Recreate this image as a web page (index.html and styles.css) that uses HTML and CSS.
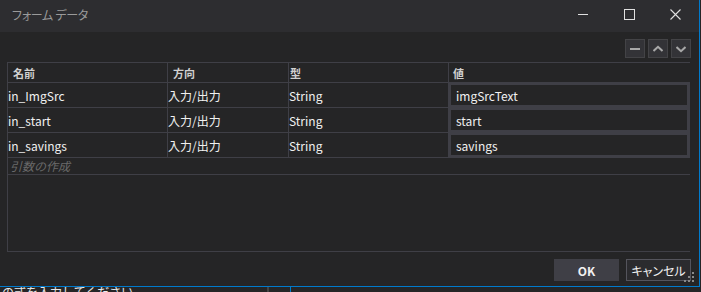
FILE: index.html
```html
<!DOCTYPE html>
<html lang="ja">
<head>
<meta charset="utf-8">
<link rel="stylesheet" href="styles.css">
</head>
<body>
<div class="window">
  <div class="titlebar">
    <div class="title">フォーム データ</div>
    <div class="controls">
      <div class="ctl"><svg width="10" height="10" viewBox="0 0 10 10"><path d="M0 5.5H10" stroke="#e0e0e0" stroke-width="1"/></svg></div>
      <div class="ctl"><svg width="11" height="11" viewBox="0 0 11 11"><rect x="0.5" y="0.5" width="10" height="10" fill="none" stroke="#e0e0e0" stroke-width="1"/></svg></div>
      <div class="ctl"><svg width="11" height="11" viewBox="0 0 11 11"><path d="M0.5 0.5L10.5 10.5M10.5 0.5L0.5 10.5" stroke="#e0e0e0" stroke-width="1.1"/></svg></div>
    </div>
  </div>
  <div class="content">
    <div class="toolbar">
      <div class="tbtn"><svg width="10" height="10" viewBox="0 0 10 10"><path d="M0 5H10" stroke="#a8a8a8" stroke-width="2"/></svg></div>
      <div class="tbtn"><svg width="10" height="10" viewBox="0 0 10 10"><path d="M0.5 7L5 2.8L9.5 7" fill="none" stroke="#a8a8a8" stroke-width="2"/></svg></div>
      <div class="tbtn"><svg width="10" height="10" viewBox="0 0 10 10"><path d="M0.5 3L5 7.2L9.5 3" fill="none" stroke="#a8a8a8" stroke-width="2"/></svg></div>
    </div>
    <div class="grid">
      <div class="hd h1">名前</div>
      <div class="hd h2">方向</div>
      <div class="hd h3">型</div>
      <div class="hd h4">値</div>

      <div class="cell">in_ImgSrc</div>
      <div class="cell">入力/出力</div>
      <div class="cell">String</div>
      <div class="vcell"><div class="tbox">imgSrcText</div></div>

      <div class="cell">in_start</div>
      <div class="cell">入力/出力</div>
      <div class="cell">String</div>
      <div class="vcell"><div class="tbox">start</div></div>

      <div class="cell">in_savings</div>
      <div class="cell">入力/出力</div>
      <div class="cell">String</div>
      <div class="vcell"><div class="tbox">savings</div></div>

      <div class="newrow">引数の作成</div>
      <div class="filler"></div>
    </div>
    <div class="footer">
      <div class="btn ok">OK</div>
      <div class="btn cancel">キャンセル</div>
    </div>
  </div>
  <svg class="grip" width="12" height="12" viewBox="0 0 12 12">
    <rect x="9" y="0" width="2" height="2" fill="#8a8a8a"/>
    <rect x="5" y="4" width="2" height="2" fill="#8a8a8a"/>
    <rect x="9" y="4" width="2" height="2" fill="#8a8a8a"/>
    <rect x="1" y="8" width="2" height="2" fill="#8a8a8a"/>
    <rect x="5" y="8" width="2" height="2" fill="#8a8a8a"/>
    <rect x="9" y="8" width="2" height="2" fill="#8a8a8a"/>
  </svg>
</div>
<div class="behind">
  <div class="behind-text">の式を入力してください</div>
  <div class="behind-gray"></div>
  <div class="behind-blue"></div>
</div>
</body>
</html>
```
FILE: styles.css
```css
html, body {
  margin: 0;
  padding: 0;
}
body {
  width: 701px;
  height: 292px;
  overflow: hidden;
  background: #252526;
  font-family: "Noto Sans CJK JP", "Noto Sans", sans-serif;
  font-size: 12px;
  color: #f1f1f1;
}
.window {
  position: relative;
  width: 699px;
  height: 286px;
  border-right: 1px solid #007acc;
  border-bottom: 1px solid #007acc;
  background: #252526;
  display: flex;
  flex-direction: column;
}
.titlebar {
  height: 32px;
  background: #2d2d30;
  display: flex;
  justify-content: space-between;
}
.title {
  padding-left: 12px;
  line-height: 30px;
  font-size: 12px;
  color: #9a9a9a;
  font-feature-settings: "palt";
  letter-spacing: -0.3px;
}
.controls {
  display: flex;
  padding-right: 1px;
}
.ctl {
  width: 46px;
  display: flex;
  justify-content: center;
  align-items: flex-start;
  padding-top: 9px;
}
.content {
  flex: 1;
  display: flex;
  flex-direction: column;
  padding: 7px 8px 0 7px;
}
.toolbar {
  display: flex;
  justify-content: flex-end;
  gap: 3px;
  height: 19px;
  margin-bottom: 4px;
}
.tbtn {
  width: 18px;
  height: 17px;
  background: #333337;
  border: 1px solid #434346;
  display: flex;
  align-items: center;
  justify-content: center;
}
.grid {
  display: grid;
  grid-template-columns: 159px 120px 159px 241px;
  grid-template-rows: 19px 24px 24px 24px 16px 76px;
  gap: 1px;
  background: #3f3f46;
  border: 1px solid #3f3f46;
  margin-right: 1px;
}
.grid > div {
  background: #252526;
}
.hd {
  display: flex;
  align-items: center;
  font-size: 11px;
  font-weight: bold;
  color: #d0d0d0;
}
.h1, .h2 { padding-left: 5px; }
.h3 { padding-left: 1px; }
.h4 { padding-left: 4px; }
.cell {
  display: flex;
  align-items: center;
  padding-top: 1px;
  color: #f1f1f1;
  white-space: nowrap;
}
.vcell {
  display: flex;
}
.tbox {
  flex: 1;
  border: 2px solid #3f3f46;
  border-right-width: 3px;
  padding-left: 5px;
  display: flex;
  align-items: center;
  color: #f1f1f1;
}
.newrow {
  grid-column: 1 / -1;
  padding-left: 2px;
  font-style: italic;
  color: #6a6a6a;
  font-size: 12px;
  line-height: 15px;
}
.filler {
  grid-column: 1 / -1;
}
.footer {
  display: flex;
  justify-content: flex-end;
  gap: 7px;
  margin-top: 7px;
}
.btn {
  width: 65px;
  height: 22px;
  box-sizing: border-box;
  display: flex;
  align-items: center;
  justify-content: center;
  font-size: 12px;
  color: #f1f1f1;
}
.ok {
  background: #3f3f46;
  font-weight: bold;
}
.cancel {
  border: 1px solid #54545c;
  background: #2b2b2e;
  font-feature-settings: "palt";
}
.grip {
  position: absolute;
  right: 4px;
  bottom: 2px;
}
.behind {
  position: relative;
  height: 5px;
  overflow: hidden;
  background: #252526;
}
.behind-text {
  padding-left: 2px;
  font-size: 12px;
  line-height: 12px;
  color: #e8e8e8;
  margin-top: -1px;
}
.behind-gray {
  position: absolute;
  left: 267px;
  top: 0;
  width: 2px;
  height: 5px;
  background: #444;
}
.behind-blue {
  position: absolute;
  left: 290px;
  top: 0;
  width: 1px;
  height: 5px;
  background: #007acc;
}
```
